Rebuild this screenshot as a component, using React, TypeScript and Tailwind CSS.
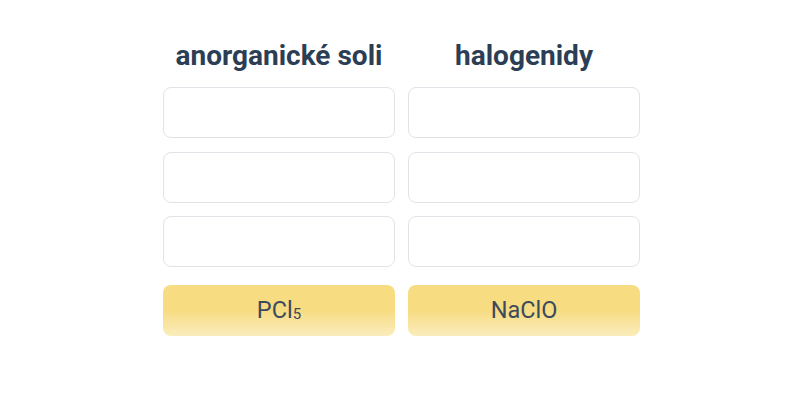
import React from 'react';

const columns = [
  { title: 'anorganické soli', chip: <>PCl<sub className="text-[15px] align-baseline relative top-[3px]">5</sub></> },
  { title: 'halogenidy', chip: <>NaClO</> },
];

const App: React.FC = () => {
  return (
    <div className="w-[800px] h-[400px] bg-white flex justify-center pl-[3px] pt-[39px]" style={{ fontFamily: 'Roboto, sans-serif' }}>
      <div className="grid grid-cols-2 gap-x-[13px]">
        {columns.map((col, i) => (
          <div key={i} className="w-[232px] flex flex-col">
            <h2 className="text-[28px] leading-[34px] font-bold text-[#2c3e55] text-center mb-[14px]">{col.title}</h2>
            <div className="flex flex-col gap-[13.5px]">
              {[0, 1, 2].map((r) => (
                <div key={r} className="h-[51px] rounded-lg border border-[#e0e4e8] bg-white"></div>
              ))}
            </div>
            <div className="mt-[18px] h-[51px] rounded-lg bg-gradient-to-b from-[#f7dc82] from-50% to-[#faedbc] flex items-center justify-center text-[23.5px] text-[#3b4a5c]">
              {col.chip}
            </div>
          </div>
        ))}
      </div>
    </div>
  );
};

export default App;
